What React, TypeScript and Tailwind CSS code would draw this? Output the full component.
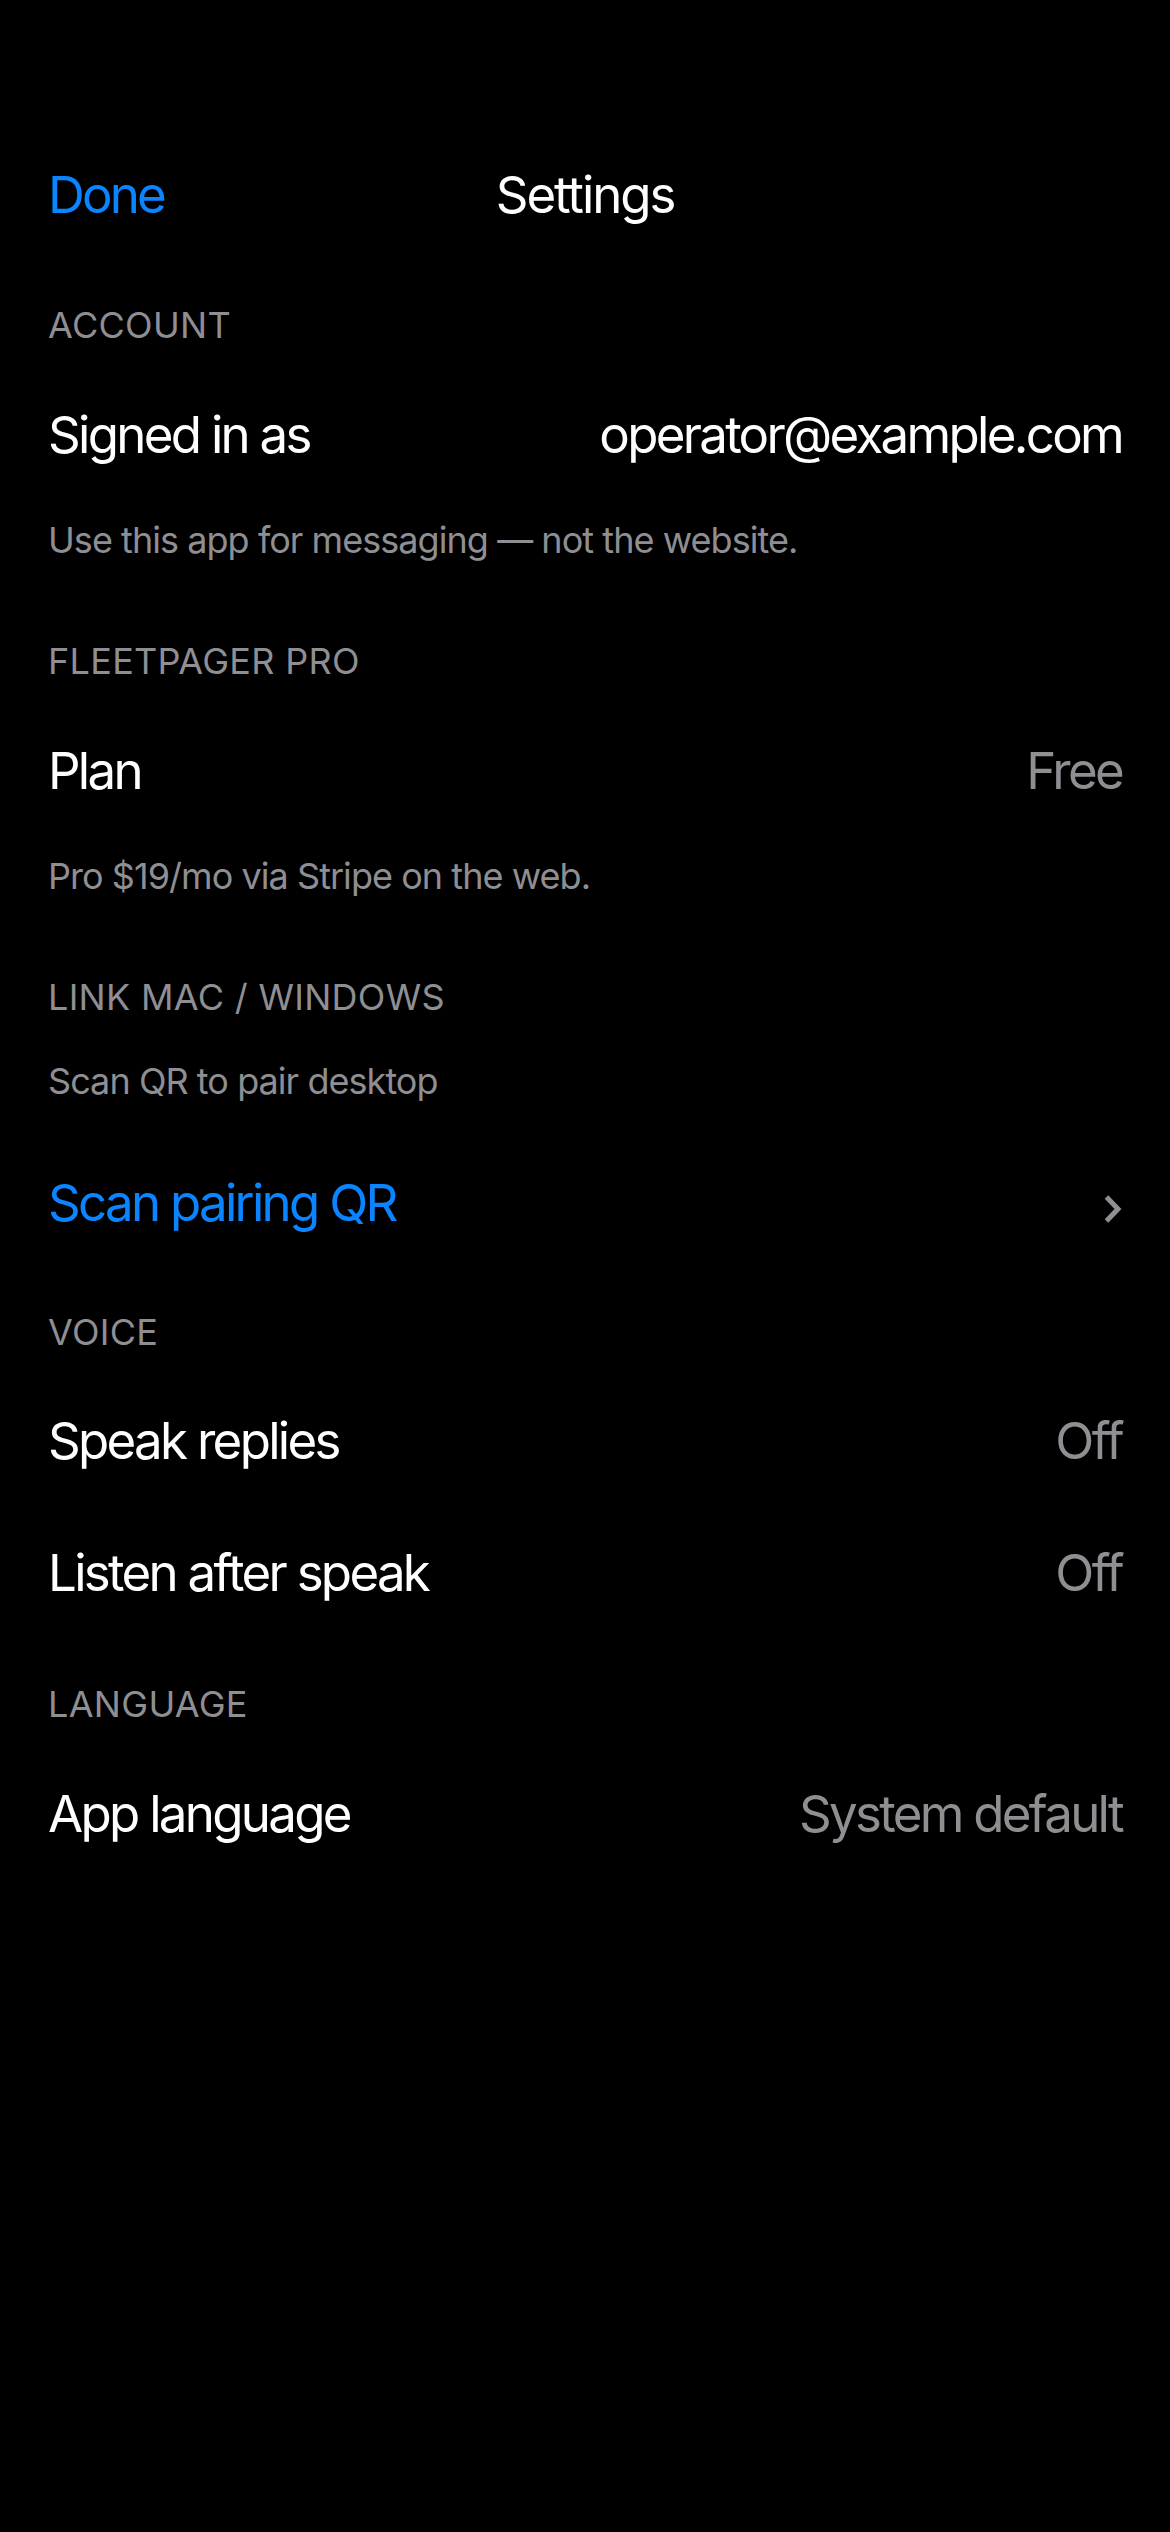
import React from 'react';

type Row = { label: string; value?: string; accent?: boolean; chevron?: boolean };

function SectionHeader({ title, className = '' }: { title: string; className?: string }) {
  return (
    <div className={`text-[36px] leading-none uppercase tracking-[0.3px] text-[#8e8e93] ${className}`}>{title}</div>
  );
}

function Note({ text, className = '' }: { text: string; className?: string }) {
  return <div className={`text-[36px] leading-none tracking-[-0.95px] text-[#8e8e93] ${className}`}>{text}</div>;
}

function SettingRow({ label, value, accent, chevron }: Row) {
  return (
    <div className="h-[132px] flex items-center justify-between tracking-[-2.7px]">
      <span className={`text-[51px] leading-none ${accent ? 'text-[#0a84ff]' : 'text-white'}`}>{label}</span>
      {value && (
        <span className={`text-[51px] leading-none ${label === 'Signed in as' ? 'text-white' : 'text-[#8e8e93]'}`}>
          {value}
        </span>
      )}
      {chevron && (
        <svg width="18" height="28" viewBox="0 0 18 28" className="mt-[14px]" fill="none">
          <polyline points="2.5,2 14,14 2.5,26" stroke="#8e8e93" strokeWidth="5" />
        </svg>
      )}
    </div>
  );
}

export default function App() {
  return (
    <div className="min-h-screen bg-black text-white px-[48px] pt-[150px] font-['Inter','Noto_Sans',sans-serif]">
      <header className="h-[88px] grid grid-cols-[1fr_auto_1fr] items-center">
        <button className="justify-self-start text-[51px] leading-none tracking-[-2.8px] text-[#0a84ff]">Done</button>
        <h1 className="text-[51px] leading-none tracking-[-2.1px] text-white font-normal">Settings</h1>
        <div />
      </header>

      <section className="mt-[69px]">
        <SectionHeader title="Account" />
        <div className="mt-[25px]">
          <SettingRow label="Signed in as" value="operator@example.com" />
        </div>
        <Note className="mt-[22px]" text="Use this app for messaging — not the website." />
      </section>

      <section className="mt-[85px]">
        <SectionHeader title="FleetPager Pro" />
        <div className="mt-[25px]">
          <SettingRow label="Plan" value="Free" />
        </div>
        <Note className="mt-[22px]" text="Pro $19/mo via Stripe on the web." />
      </section>

      <section className="mt-[85px]">
        <SectionHeader title="Link Mac / Windows" />
        <Note className="mt-[48px]" text="Scan QR to pair desktop" />
        <div className="mt-[37px]">
          <SettingRow label="Scan pairing QR" accent chevron />
        </div>
      </section>

      <section className="mt-[46px]">
        <SectionHeader title="Voice" />
        <div className="mt-[24px]">
          <SettingRow label="Speak replies" value="Off" />
          <SettingRow label="Listen after speak" value="Off" />
        </div>
      </section>

      <section className="mt-[48px]">
        <SectionHeader title="Language" />
        <div className="mt-[25px]">
          <SettingRow label="App language" value="System default" />
        </div>
      </section>
    </div>
  );
}
